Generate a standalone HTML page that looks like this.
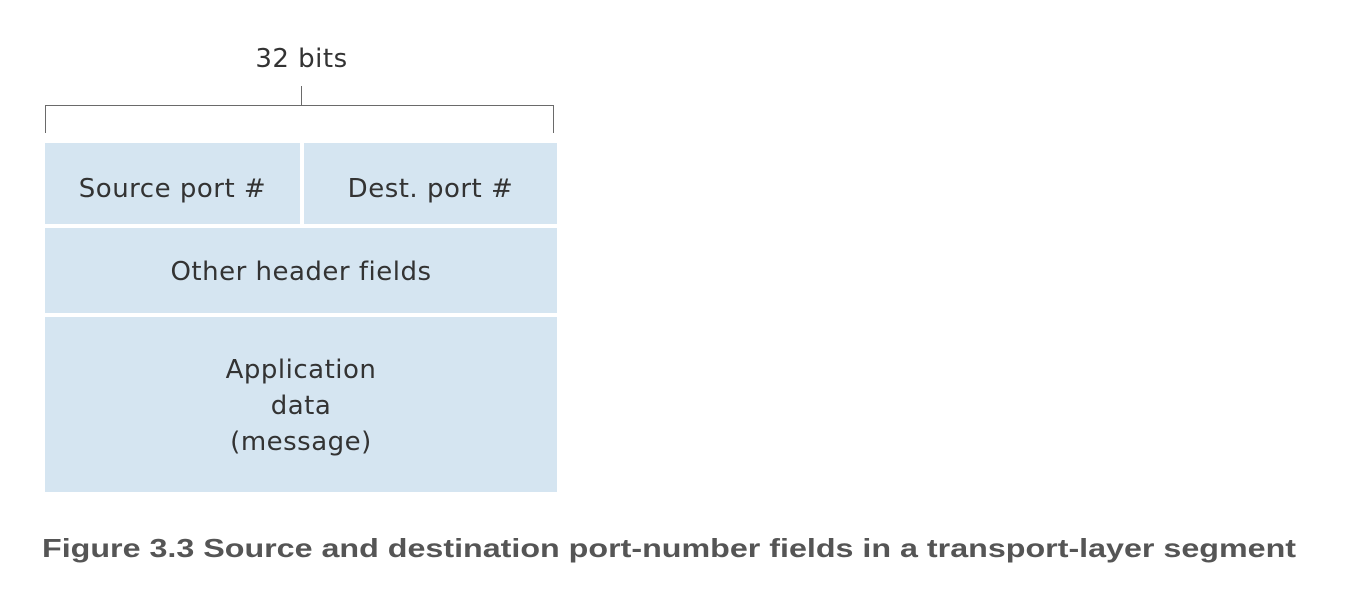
<!DOCTYPE html>
<html><head><style>
body{margin:0;width:1362px;height:592px;background:#fff;position:relative;font-family:"DejaVu Sans",sans-serif;overflow:hidden}
.b{position:absolute;background:#d5e5f1;color:#333;font-size:26px;letter-spacing:0.5px;display:flex;align-items:center;justify-content:center;text-align:center;line-height:36px;box-sizing:border-box}
.l{position:absolute;background:#6a6a6a}
</style></head><body>
<div style="position:absolute;left:180px;top:44px;width:243px;text-align:center;font-size:26px;letter-spacing:0.5px;color:#333">32 bits</div>
<div class="l" style="left:301px;top:86px;width:1px;height:20px"></div>
<div class="l" style="left:45px;top:105px;width:509px;height:1px"></div>
<div class="l" style="left:45px;top:105px;width:1px;height:28px"></div>
<div class="l" style="left:553px;top:105px;width:1px;height:28px"></div>
<div class="b" style="left:45px;top:143px;width:255px;height:81px;padding-top:10px">Source port #</div>
<div class="b" style="left:304px;top:143px;width:253px;height:81px;padding-top:10px">Dest. port #</div>
<div class="b" style="left:45px;top:228px;width:512px;height:85px;padding-top:3px">Other header fields</div>
<div class="b" style="left:45px;top:317px;width:512px;height:175px;padding-top:3px">Application<br>data<br>(message)</div>
<div style="position:absolute;left:42px;top:533px;font-family:'Liberation Sans',sans-serif;font-size:26px;font-weight:bold;color:#555;transform:scaleX(1.24);transform-origin:0 0;white-space:nowrap">Figure 3.3 Source and destination port-number fields in a transport-layer segment</div>
</body></html>
